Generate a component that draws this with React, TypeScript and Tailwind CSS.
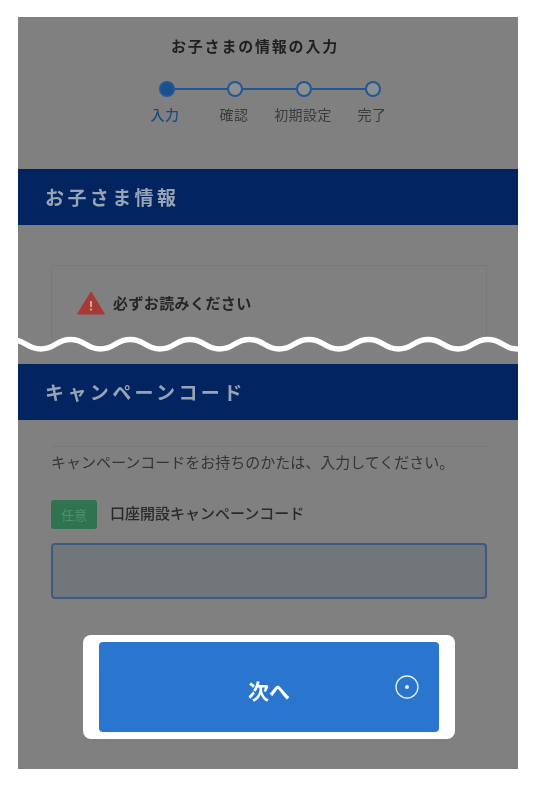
const font = { fontFamily: '"Noto Sans CJK JP", "Noto Sans", sans-serif' };

// wave divider between the two cut-off parts of the form
const wavePath = () => {
  let d = 'M-37 13';
  for (let x = -37; x < 520; x += 59.6) {
    d += ` C${x + 15} 13 ${x + 15} 3.5 ${x + 30} 3.5 S${x + 45} 13 ${x + 59.6} 13`;
  }
  return d;
};

const Step = ({ active }: { active?: boolean }) => (
  <span
    className={`block h-[16px] w-[16px] shrink-0 rounded-full border-2 border-[#235792] ${active ? 'bg-[#17518f]' : 'bg-[#8a8f91]'}`}
  />
);

const SectionBar = ({ title }: { title: string }) => (
  <div className="flex h-[56px] items-center bg-[#022561] pl-[27px] text-[19px] font-bold tracking-[3.4px] whitespace-nowrap text-[#98a3b4]">
    {title}
  </div>
);

export default function App() {
  return (
    <div className="h-[786px] w-[536px] overflow-hidden bg-white pt-[17px] pl-[18px] blur-[0.7px]" style={font}>
      <div className="flex h-[752px] w-[500px] flex-col bg-[#808080]">
        <h1 className="mt-[19px] pr-[26px] text-center text-[15px] leading-[20px] font-bold tracking-[1.8px] text-[#1f1f1f]">
          お子さまの情報の入力
        </h1>

        <div className="mt-[25px] ml-[141px] flex items-center">
          <Step active />
          <span className="h-[2px] w-[52px] bg-[#235792]" />
          <Step />
          <span className="h-[2px] w-[53px] bg-[#235792]" />
          <Step />
          <span className="h-[2px] w-[53px] bg-[#235792]" />
          <Step />
        </div>

        <div className="mt-[9px] ml-[117px] flex text-center text-[14px] leading-[16px] tracking-[0.4px] text-[#383c3f]">
          <span className="w-[60px] font-medium text-[#194a80]">入力</span>
          <span className="w-[78px]">確認</span>
          <span className="w-[60px] whitespace-nowrap">初期設定</span>
          <span className="w-[78px]">完了</span>
        </div>

        <div className="mt-[47px]">
          <SectionBar title="お子さま情報" />
        </div>

        <div className="mr-[31px] ml-[33px] mt-[40px] h-[72px] border border-b-0 border-[#797979] pt-[25px] pl-[25px]">
          <div className="flex items-center gap-[8px]">
            <svg width="28" height="24" viewBox="0 0 28 24">
              <path d="M14 1 L27.5 23 H0.5 Z" fill="#a63a36" stroke="#a63a36" strokeLinejoin="round" />
              <rect x="13" y="10" width="2" height="6" fill="#d9a09c" />
              <rect x="13" y="17.5" width="2" height="2" fill="#d9a09c" />
            </svg>
            <span className="text-[15px] leading-[20px] font-bold tracking-[0.4px] text-[#262626]">必ずお読みください</span>
          </div>
        </div>

        <svg className="-mt-[1px] block shrink-0" width="500" height="28" viewBox="0 0 500 28">
          <path d={wavePath()} fill="none" stroke="#ffffff" strokeWidth="5.5" />
        </svg>

        <SectionBar title="キャンペーンコード" />

        <div className="mr-[31px] ml-[33px] mt-[26px] border-t border-[#797979] pt-[6px] text-[15px] leading-[18px] whitespace-nowrap text-[#333537]">
          キャンペーンコードをお持ちのかたは、入力してください。
        </div>

        <div className="mt-[29px] ml-[33px] flex items-center gap-[13px]">
          <span className="flex h-[29px] w-[46px] items-center justify-center rounded-[3px] bg-[#2f7350] text-[13px] text-[#4a9270]">
            任意
          </span>
          <span className="-mt-[3px] text-[15px] font-medium text-[#2a2a2a]">口座開設キャンペーンコード</span>
        </div>

        <div className="mr-[31px] ml-[33px] mt-[14px] h-[56px] rounded-[4px] border-2 border-[#3d5a80] bg-[#71767b]" />

        <div className="mt-[36px] ml-[65px] w-[372px] rounded-[8px] bg-white px-[16px] py-[7px]">
          <button className="relative flex h-[90px] w-full items-center justify-center rounded-[4px] bg-[#2a75cd] pt-[8px] text-[21px] font-bold text-white">
            次へ
            <svg className="absolute top-[33px] right-[20px]" width="24" height="24" viewBox="0 0 24 24">
              <circle cx="12" cy="12" r="11" fill="none" stroke="#e6f0fb" strokeWidth="1.3" />
              <circle cx="12" cy="12" r="2" fill="#e6f0fb" />
            </svg>
          </button>
        </div>
      </div>
    </div>
  );
}
